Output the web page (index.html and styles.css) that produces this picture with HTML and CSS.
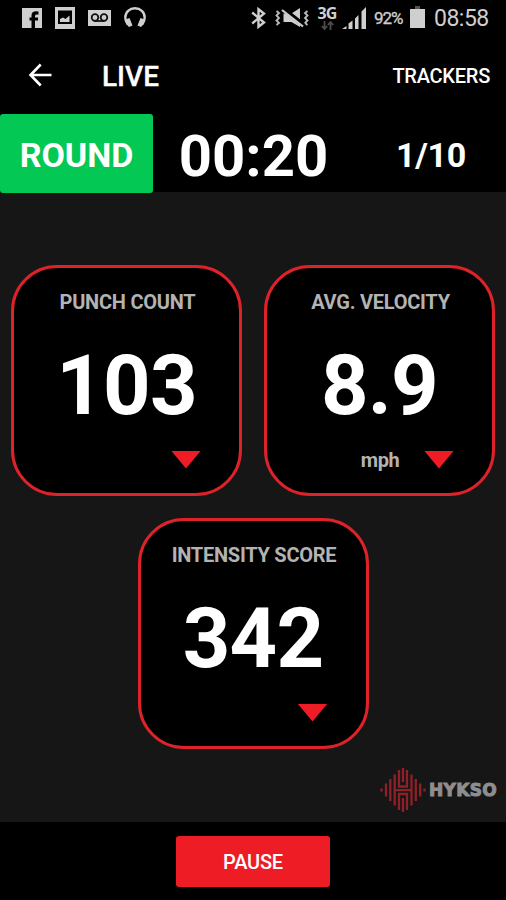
FILE: index.html
```html
<!DOCTYPE html>
<html lang="en">
    <head>
        <meta charset="utf-8">
        <meta name="viewport" content="width=device-width, initial-scale=1.0">
        <title>Live</title>
        <link rel="stylesheet" href="styles.css">
    </head>
    <body>
        <div class="statusbar">
            <div class="notifications">
                <svg width="20" height="20" viewBox="0 0 20 20">
                    <path fill="#cfcfcf" fill-rule="evenodd" d="M0 0h20v20H0zM16.500 3.500q-7-1-7 4V9.500H7.500v3h2V20h3.500v-7.500h3v-3h-3V8q0-1.700 3.500-1.300z"/>
                </svg>
                <svg width="20" height="22" viewBox="0 0 20 22">
                    <path fill="#cfcfcf" fill-rule="evenodd" d="M0 0h20v22H0zM3 3.500v13.500h14V3.500z"/>
                    <path fill="#cfcfcf" d="M5 15v-3l3-1.500 2.500 1.500 4-3.500V15z"/>
                </svg>
                <svg width="23" height="16" viewBox="0 0 23 16">
                    <rect width="23" height="16" fill="#cfcfcf"/>
                    <g fill="none" stroke="#111" stroke-width="1.800">
                        <circle cx="7" cy="7.500" r="3.300"/>
                        <circle cx="16" cy="7.500" r="3.300"/>
                        <path d="M6.500 11h10"/>
                    </g>
                </svg>
                <svg width="22" height="21" viewBox="0 0 22 21">
                    <path fill="none" stroke="#cfcfcf" stroke-width="2.400" d="M3.500 17Q1.300 14 1.300 10.500a9.700 9.300 0 0 1 19.400 0q0 3.500-2.200 6.500"/>
                    <path fill="#cfcfcf" d="M1.500 12.500l4-1.500 3 7.500-3.500 1.500-2.800-3zM20.500 12.500l-4-1.500-3 7.500 3.500 1.500 2.800-3z"/>
                </svg>
            </div>
            <div class="system">
                <svg class="bluetooth" width="15" height="22" viewBox="0 0 15 22">
                    <path fill="none" stroke="#cfcfcf" stroke-width="2.400" d="M1.200 5.500L13 15.500l-5.500 4.300V2.200L13 6.500 1.200 16.500"/>
                </svg>
                <svg class="mute" width="34" height="20" viewBox="0 0 34 20">
                    <path fill="none" stroke="#bbb" stroke-width="1.800" d="M1.500 3l2.500 2-2.500 2.500 2.500 2.500-2.500 2.500L4 15l-2.500 2M32.500 3L30 5l2.500 2.500L30 10l2.500 2.500L30 15l2.500 2"/>
                    <path fill="#cfcfcf" d="M8.500 5.500h8L25 0v19L16.500 14h-8z"/>
                    <path stroke="#000" stroke-width="4.400" d="M8.500 1l20 16"/>
                    <path stroke="#cfcfcf" stroke-width="2.200" d="M7 2l21 16.500"/>
                </svg>
                <div class="network">
                    <span>3G</span>
                    <svg width="13" height="10" viewBox="0 0 13 10">
                        <path fill="none" stroke="#4c4c4c" stroke-width="1.800" d="M3.500 0v8M.800 5l2.700 3 2.700-3M9.500 9V1M6.800 4l2.700-3 2.700 3"/>
                    </svg>
                </div>
                <svg class="signal" width="25" height="22" viewBox="0 0 25 22">
                    <path fill="#cfcfcf" d="M0 22l4.500-3v3zM6.500 22v-5.500l4-3V22zM13 22V11.500L16.500 8v14zM19.500 22V4.500L24 0v22z"/>
                </svg>
                <span class="percent">92%</span>
                <svg class="battery" width="15" height="22" viewBox="0 0 15 22">
                    <path fill="#555" d="M5 0h5v3H5z"/>
                    <path fill="#cfcfcf" d="M0 3h15v19H0z"/>
                </svg>
                <span class="clock">08:58</span>
            </div>
        </div>

        <div class="toolbar">
            <svg class="back" width="24" height="24" viewBox="0 0 24 24">
                <path fill="none" stroke="#fff" stroke-width="2.600" d="M12.700 1.500L2.500 12l10.200 10.500M2.500 12H23.500"/>
            </svg>
            <h1>LIVE</h1>
            <a class="trackers">TRACKERS</a>
        </div>

        <div class="round-bar">
            <div class="round-label">ROUND</div>
            <div class="timer">00:20</div>
            <div class="round-number">1/10</div>
        </div>

        <div class="stats">
            <div class="card">
                <label>PUNCH COUNT</label>
                <div class="value">103</div>
                <div class="card-foot"><span></span><i class="arrow"></i></div>
            </div>
            <div class="card">
                <label>AVG. VELOCITY</label>
                <div class="value">8.9</div>
                <div class="card-foot"><span>mph</span><i class="arrow"></i></div>
            </div>
            <div class="card">
                <label>INTENSITY SCORE</label>
                <div class="value">342</div>
                <div class="card-foot"><span></span><i class="arrow"></i></div>
            </div>
        </div>

        <div class="brand">
            <svg width="46" height="44" viewBox="0 0 46 44">
                <path fill="none" stroke="#8f2028" stroke-width="2.300" d="M1.500 20.500v3M6 15.500v13M10.300 11v22M14.700 6.500v31M19 2v16.500h8V2M19 42V26h8v16M23 0v14M23 30v14M31.500 6.500v31M35.800 11v22M40.200 15.500v13M44.500 20.500v3M15 22.200h16.500"/>
            </svg>
            <span>HYKSO</span>
        </div>

        <div class="footer">
            <button class="pause">PAUSE</button>
        </div>
    </body>
</html>
```
FILE: styles.css
```css
body {
    width: 506px;
    height: 900px;
    margin: 0;
    display: flex;
    flex-direction: column;
    background: #161616;
    color: #fff;
    font-family: Roboto, sans-serif;
    overflow: hidden;
}

svg {
    display: block;
    flex: none;
}

.statusbar {
    height: 36px;
    display: flex;
    justify-content: space-between;
    background: #000;
    color: #cfcfcf;
}

.notifications,
.system {
    display: flex;
    align-items: center;
}

.notifications {
    height: 35px;
    padding-left: 22px;
    gap: 13px;
}

.system {
    height: 35px;
    padding-right: 17px;
}

.bluetooth {
    margin-right: 9px;
}

.network {
    width: 22px;
    margin-left: 7px;
    padding-top: 1px;
    display: flex;
    flex-direction: column;
    align-items: center;
    font: bold 16px/16px "Open Sans", sans-serif;
    letter-spacing: -0.8px;
}

.signal {
    margin-left: 4px;
}

.percent {
    width: 31px;
    margin-left: 7px;
    padding-top: 1px;
    font-size: 17px;
    letter-spacing: -1px;
    -webkit-text-stroke: 0.3px #cfcfcf;
}

.battery {
    margin-left: 5px;
    margin-top: -2px;
}

.clock {
    width: 55px;
    margin-left: 9px;
    padding-top: 2px;
    font-size: 23px;
    letter-spacing: -0.5px;
}

.toolbar {
    height: 78px;
    display: flex;
    align-items: center;
    background: #000;
}

.back {
    margin-left: 28px;
}

.toolbar h1 {
    margin: 2px 0 0 50px;
    font-size: 28px;
    font-weight: 500;
    -webkit-text-stroke: 0.3px #fff;
}

.trackers {
    margin: 2px 16px 0 auto;
    font-size: 20px;
    font-weight: 500;
    letter-spacing: -0.25px;
}

.round-bar {
    height: 78px;
    display: grid;
    grid-template-columns: 153px 200px 1fr;
    align-items: center;
    background: #000;
    font-weight: bold;
    text-align: center;
}

.round-label {
    align-self: start;
    height: 79px;
    line-height: 82px;
    background: #03c853;
    border-radius: 3px;
    font-size: 34px;
}

.timer {
    padding: 3px 0 0 1px;
    font-size: 58px;
    line-height: 78px;
}

.round-number {
    padding-top: 1px;
    padding-left: 3px;
    font-size: 34px;
    letter-spacing: -0.3px;
}

.stats {
    height: 557px;
    padding-top: 73px;
    box-sizing: border-box;
    display: flex;
    flex-wrap: wrap;
    justify-content: center;
    align-content: flex-start;
    gap: 22px;
}

.card {
    width: 231px;
    height: 231px;
    box-sizing: border-box;
    border: 3px solid #de2229;
    border-radius: 46px;
    background: #000;
    text-align: center;
}

.card label {
    display: block;
    margin-top: 22px;
    padding-left: 2px;
    color: #b3b3b3;
    font-size: 20px;
    font-weight: bold;
    line-height: 24px;
    letter-spacing: -0.25px;
}

.value {
    margin-top: 24px;
    font-size: 83px;
    font-weight: bold;
    line-height: 96px;
    letter-spacing: -0.8px;
}

.card-foot {
    height: 26px;
    margin-top: 13px;
    display: grid;
    grid-template-columns: 60px 30px;
    column-gap: 14px;
    padding-left: 83px;
    align-items: center;
    color: #b3b3b3;
    font-size: 20px;
    font-weight: bold;
    letter-spacing: -0.4px;
}

.arrow {
    width: 30px;
    height: 18px;
    margin-top: -1px;
    background: #ee1c25;
    clip-path: polygon(0 0, 100% 0, 50% 100%);
}

.brand {
    height: 44px;
    margin-top: auto;
    padding-right: 9px;
    display: flex;
    align-items: center;
    justify-content: flex-end;
    gap: 3px;
    color: #8e8e8e;
    font: bold 17px "DejaVu Sans", sans-serif;
}

.brand span {
    letter-spacing: 0.3px;
    -webkit-text-stroke: 1px #8e8e8e;
}

.footer {
    height: 78px;
    margin-top: 10px;
    padding-top: 14px;
    box-sizing: border-box;
    background: #000;
    text-align: center;
}

.pause {
    width: 154px;
    height: 51px;
    padding: 0;
    border: 0;
    border-radius: 3px;
    background: #ee1c25;
    color: #fff;
    font: 500 20px Roboto, sans-serif;
    letter-spacing: -0.2px;
}
```
